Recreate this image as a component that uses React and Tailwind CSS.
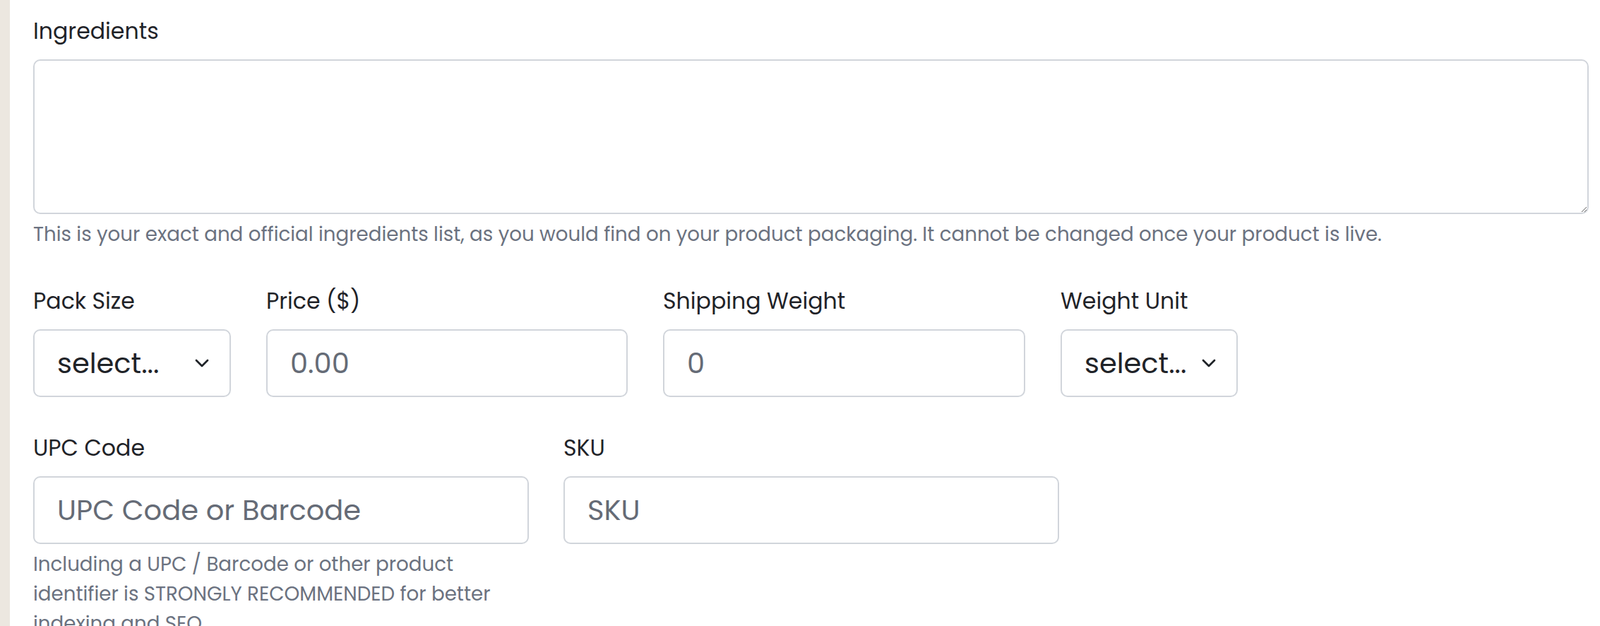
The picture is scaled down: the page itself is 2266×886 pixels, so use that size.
import React from 'react';

const font = "font-['Poppins','Inter','Noto_Sans',sans-serif]";

const Label = ({ children }) => (
  <label className="block text-[31.6px] leading-[48px] text-[#1f2328]">{children}</label>
);

const Help = ({ children, className = "" }) => (
  <p className={`mt-2 text-[27.7px] leading-[42px] text-[#6b7280] ${className}`}>{children}</p>
);

const Chevron = () => (
  <svg width="20" height="12" viewBox="0 0 20 12" fill="none" className="shrink-0">
    <path d="M2 2 L10 10 L18 2" stroke="#1f2328" strokeWidth="2.8" strokeLinecap="round" strokeLinejoin="round" />
  </svg>
);

const Select = ({ width }) => (
  <div className={`flex h-[96px] ${width} items-center justify-between rounded-[10px] border-2 border-[#d1d5db] bg-white pl-[32px] pr-[29px]`}>
    <span className="text-[40px] leading-none text-[#1f2328]">select...</span>
    <Chevron />
  </div>
);

const Input = ({ width, placeholder }) => (
  <input
    type="text"
    placeholder={placeholder}
    className={`h-[96px] ${width} rounded-[10px] border-2 border-[#d1d5db] bg-white px-[32px] text-[40px] text-[#1f2328] outline-none placeholder:text-[#656b76]`}
  />
);

export default function App() {
  return (
    <div className={`flex min-h-screen bg-white ${font}`}>
      <div className="w-[14px] shrink-0 bg-[#ece7e0]" />
      <div className="flex-1 pl-[33px] pr-4 pt-[20px]">
        <div>
          <Label>Ingredients</Label>
          <textarea className="mt-4 block h-[219px] w-full rounded-[10px] border-2 border-[#d1d5db] bg-white outline-none" />
          <Help>This is your exact and official ingredients list, as you would find on your product packaging. It cannot be changed once your product is live.</Help>
        </div>

        <div className="mt-[49px] flex items-start gap-[50px]">
          <div>
            <Label>Pack Size</Label>
            <div className="mt-4"><Select width="w-[280px]" /></div>
          </div>
          <div>
            <Label>Price ($)</Label>
            <div className="mt-4"><Input width="w-[512px]" placeholder="0.00" /></div>
          </div>
          <div>
            <Label>Shipping Weight</Label>
            <div className="mt-4"><Input width="w-[513px]" placeholder="0" /></div>
          </div>
          <div>
            <Label>Weight Unit</Label>
            <div className="mt-4"><Select width="w-[251px]" /></div>
          </div>
        </div>

        <div className="mt-[48px] flex items-start gap-[49px]">
          <div className="w-[702px]">
            <Label>UPC Code</Label>
            <div className="mt-4"><Input width="w-[702px]" placeholder="UPC Code or Barcode" /></div>
            <Help>Including a UPC / Barcode or other product identifier is STRONGLY RECOMMENDED for better indexing and SEO</Help>
          </div>
          <div className="w-[702px]">
            <Label>SKU</Label>
            <div className="mt-4"><Input width="w-[702px]" placeholder="SKU" /></div>
          </div>
        </div>
      </div>
    </div>
  );
}
